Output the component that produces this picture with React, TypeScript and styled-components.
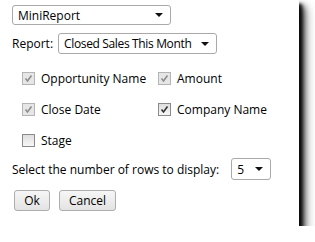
import React from 'react'
import styled, { createGlobalStyle } from 'styled-components'

const GlobalStyle = createGlobalStyle`
  html, body {
    margin: 0;
    padding: 0;
    background: #ffffff;
  }
  body {
    font-family: "Open Sans", "Noto Sans", "Liberation Sans", sans-serif;
    font-size: 12px;
    color: #000;
  }
`

const Panel = styled.div`
  width: 299px;
  height: 226px;
  box-sizing: border-box;
  background: #ffffff;
  padding: 5px 0 0 12px;
  box-shadow: 3px 4px 3px rgba(0, 0, 0, 0.85), 5px 6px 6px rgba(0, 0, 0, 0.7),
    7px 8px 10px rgba(0, 0, 0, 0.4);
  display: flex;
  flex-direction: column;
`

const Row = styled.div<{ $top?: number }>`
  display: flex;
  align-items: center;
  margin-top: ${(p) => p.$top || 0}px;
`

const Label = styled.span<{ $gap?: number }>`
  margin-right: ${(p) => p.$gap || 5}px;
  white-space: nowrap;
`

const SelectBox = styled.div<{ $w: number; $h?: number; $tight?: boolean }>`
  width: ${(p) => p.$w}px;
  height: ${(p) => p.$h || 20}px;
  box-sizing: border-box;
  border: 1px solid #a9a9a9;
  border-radius: 3px;
  background: #fff;
  display: flex;
  align-items: center;
  justify-content: space-between;
  padding: 0 7px 0 5px;
  white-space: nowrap;
  letter-spacing: ${(p) => (p.$tight ? '-0.35px' : 'normal')};
`

const Arrow = styled.span`
  width: 0;
  height: 0;
  border-left: 4px solid transparent;
  border-right: 4px solid transparent;
  border-top: 4px solid #111;
  flex: none;
`

const Options = styled.div`
  display: grid;
  grid-template-columns: 136px auto;
  grid-auto-rows: 31px;
  margin: 9px 0 0 10px;
`

const Option = styled.label`
  display: flex;
  align-items: center;
  gap: 6px;
  white-space: nowrap;
  color: #000;
`

const Box = styled.span<{ $disabled?: boolean }>`
  width: 13px;
  height: 13px;
  box-sizing: border-box;
  border: 1px solid ${(p) => (p.$disabled ? '#b4b4b4' : '#8a8a8a')};
  background: ${(p) => (p.$disabled ? '#e6e6e6' : 'linear-gradient(#dedede, #f7f7f7)')};
  display: flex;
  align-items: center;
  justify-content: center;
  flex: none;
`

const Buttons = styled.div`
  display: flex;
  gap: 9px;
  margin: 10px 0 0 2px;
`

const Button = styled.button<{ $w: number }>`
  width: ${(p) => p.$w}px;
  height: 21px;
  box-sizing: border-box;
  border: 1px solid #adadad;
  border-radius: 3px;
  background: linear-gradient(#f6f6f6, #e3e3e3);
  font: inherit;
  color: #000;
  padding: 0;
`

const Check = ({ on, disabled }: { on?: boolean; disabled?: boolean }) => (
  <Box $disabled={disabled}>
    {on && (
      <svg width="9" height="9" viewBox="0 0 9 9">
        <path
          d="M1.5 4.5 L3.5 7 L7.5 1.5"
          fill="none"
          stroke={disabled ? '#8c8c8c' : '#333'}
          strokeWidth="1.6"
        />
      </svg>
    )}
  </Box>
)

const fields = [
  { name: 'Opportunity Name', on: true, disabled: true },
  { name: 'Amount', on: true, disabled: true },
  { name: 'Close Date', on: true, disabled: true },
  { name: 'Company Name', on: true, disabled: false },
  { name: 'Stage', on: false, disabled: false },
]

export default function App() {
  return (
    <>
      <GlobalStyle />
      <Panel>
        <Row>
          <SelectBox $w={159}>
            MiniReport
            <Arrow />
          </SelectBox>
        </Row>
        <Row $top={8}>
          <Label>Report:</Label>
          <SelectBox $w={159} $h={21} $tight>
            Closed Sales This Month
            <Arrow />
          </SelectBox>
        </Row>
        <Options>
          {fields.map((f) => (
            <Option key={f.name}>
              <Check on={f.on} disabled={f.disabled} />
              {f.name}
            </Option>
          ))}
        </Options>
        <Row $top={2}>
          <Label $gap={12}>Select the number of rows to display:</Label>
          <SelectBox $w={40} $h={22}>
            5
            <Arrow />
          </SelectBox>
        </Row>
        <Buttons>
          <Button $w={36}>Ok</Button>
          <Button $w={57}>Cancel</Button>
        </Buttons>
      </Panel>
    </>
  )
}
